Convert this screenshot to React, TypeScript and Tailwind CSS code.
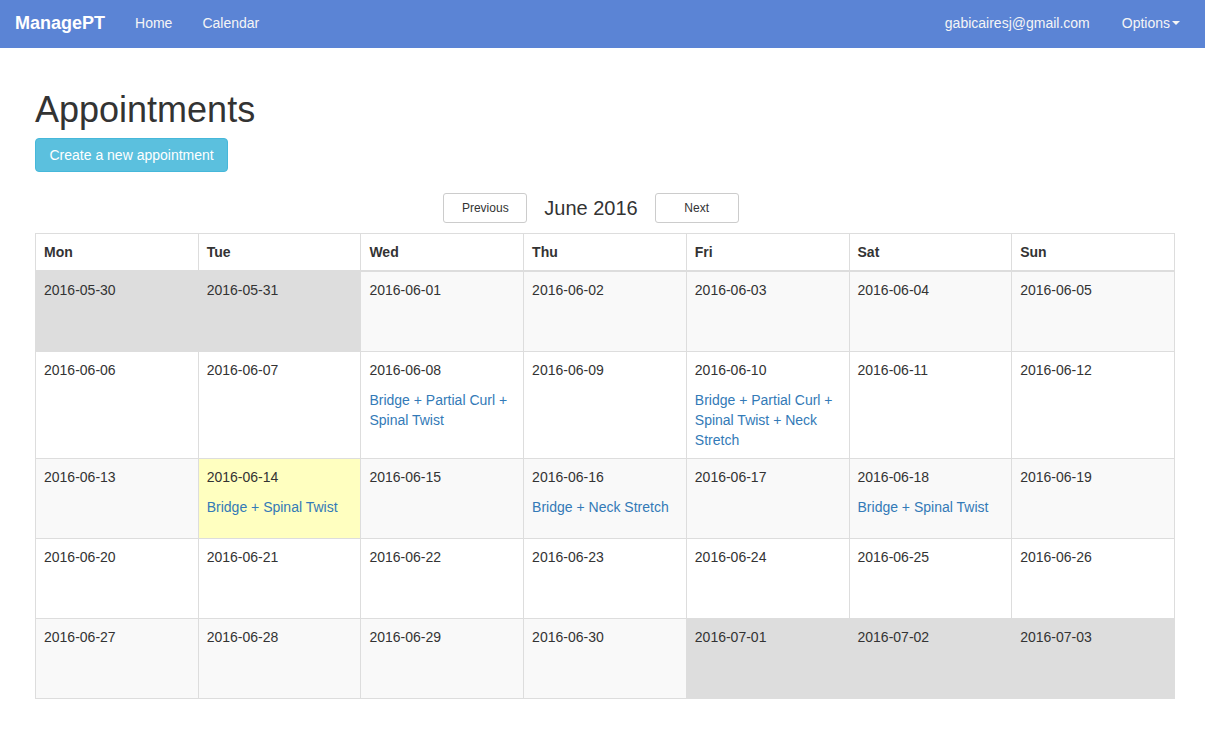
import React from "react";

type Day = { date: string; muted?: boolean; today?: boolean; items?: string };

const weeks: Day[][] = [
  [
    { date: "2016-05-30", muted: true },
    { date: "2016-05-31", muted: true },
    { date: "2016-06-01" },
    { date: "2016-06-02" },
    { date: "2016-06-03" },
    { date: "2016-06-04" },
    { date: "2016-06-05" },
  ],
  [
    { date: "2016-06-06" },
    { date: "2016-06-07" },
    { date: "2016-06-08", items: "Bridge + Partial Curl + Spinal Twist" },
    { date: "2016-06-09" },
    { date: "2016-06-10", items: "Bridge + Partial Curl + Spinal Twist + Neck Stretch" },
    { date: "2016-06-11" },
    { date: "2016-06-12" },
  ],
  [
    { date: "2016-06-13" },
    { date: "2016-06-14", today: true, items: "Bridge + Spinal Twist" },
    { date: "2016-06-15" },
    { date: "2016-06-16", items: "Bridge + Neck Stretch" },
    { date: "2016-06-17" },
    { date: "2016-06-18", items: "Bridge + Spinal Twist" },
    { date: "2016-06-19" },
  ],
  [
    { date: "2016-06-20" },
    { date: "2016-06-21" },
    { date: "2016-06-22" },
    { date: "2016-06-23" },
    { date: "2016-06-24" },
    { date: "2016-06-25" },
    { date: "2016-06-26" },
  ],
  [
    { date: "2016-06-27" },
    { date: "2016-06-28" },
    { date: "2016-06-29" },
    { date: "2016-06-30" },
    { date: "2016-07-01", muted: true },
    { date: "2016-07-02", muted: true },
    { date: "2016-07-03", muted: true },
  ],
];

const dayNames = ["Mon", "Tue", "Wed", "Thu", "Fri", "Sat", "Sun"];

export default function App() {
  return (
    <div className="min-h-[731px] bg-white text-[#333] text-[14px] leading-[20px] font-['Liberation_Sans',Arial,sans-serif]">
      <nav className="h-[48px] bg-[#5b84d5] flex items-center justify-between pr-[10px] pb-[2px]">
        <div className="flex items-center">
          <a className="px-[15px] text-[18px] font-bold text-white">ManagePT</a>
          <a className="px-[15px] text-[#f5f5f5]">Home</a>
          <a className="px-[15px] text-[#f5f5f5]">Calendar</a>
        </div>
        <div className="flex items-center">
          <a className="pl-[15px] pr-[17px] text-[#f5f5f5]">gabicairesj@gmail.com</a>
          <a className="px-[15px] text-[#f5f5f5] flex items-center">
            Options
            <span className="ml-[2px] w-0 h-0 border-t-[4px] border-t-[#f5f5f5] border-x-[4px] border-x-transparent" />
          </a>
        </div>
      </nav>

      <div className="pl-[35px] pr-[30px] pt-[42px]">
        <h1 className="text-[36px] leading-[40px] font-normal">Appointments</h1>
        <button className="mt-[8px] h-[34px] px-[13.5px] rounded-[4px] bg-[#5bc0de] border border-[#46b8da] text-white">
          Create a new appointment
        </button>

        <div className="flex items-center justify-center gap-[17px] mt-[21px] pr-[28px]">
          <button className="w-[84px] h-[30px] text-[12px] rounded-[3px] border border-[#ccc] bg-white">Previous</button>
          <span className="text-[20px] leading-[24px]">June 2016</span>
          <button className="w-[84px] h-[30px] text-[12px] rounded-[3px] border border-[#ccc] bg-white">Next</button>
        </div>

        <table className="mt-[10px] w-full table-fixed border-collapse border border-[#ddd]">
          <thead>
            <tr>
              {dayNames.map((d) => (
                <th key={d} className="text-left font-bold p-[8px] border border-[#ddd] border-b-2">
                  {d}
                </th>
              ))}
            </tr>
          </thead>
          <tbody>
            {weeks.map((week, wi) => (
              <tr key={wi} className={wi % 2 === 0 ? "bg-[#f9f9f9]" : "bg-white"}>
                {week.map((day) => (
                  <td
                    key={day.date}
                    className={
                      "align-top p-[8px] h-[80px] border border-[#ddd] " +
                      (day.muted ? "bg-[#dddddd]" : day.today ? "bg-[#ffffc0]" : "")
                    }
                  >
                    <p className="mb-[10px]">{day.date}</p>
                    {day.items && <a className="text-[#337ab7]">{day.items}</a>}
                  </td>
                ))}
              </tr>
            ))}
          </tbody>
        </table>
      </div>
    </div>
  );
}
